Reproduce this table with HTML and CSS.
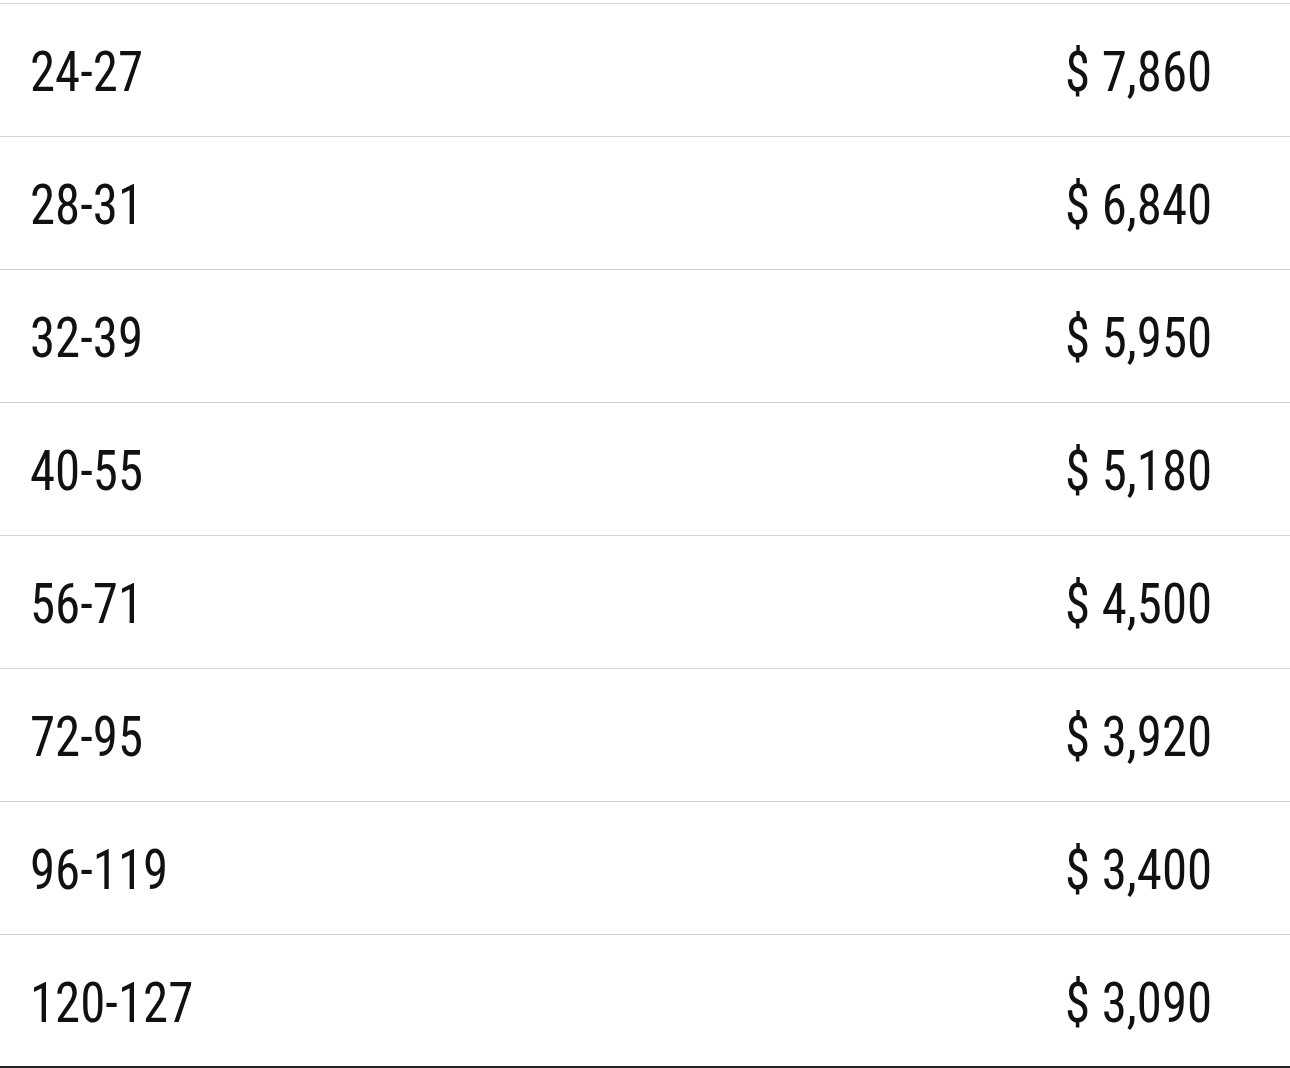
FILE: index.html
```html
<!DOCTYPE html>
<html>
<head>
<meta charset="utf-8">
<link rel="stylesheet" href="styles.css">
</head>
<body>
<div class="table">
  <div class="row"><span class="range">24-27</span><span class="price">$ 7,860</span></div>
  <div class="row"><span class="range">28-31</span><span class="price">$ 6,840</span></div>
  <div class="row"><span class="range">32-39</span><span class="price">$ 5,950</span></div>
  <div class="row"><span class="range">40-55</span><span class="price">$ 5,180</span></div>
  <div class="row"><span class="range">56-71</span><span class="price">$ 4,500</span></div>
  <div class="row"><span class="range">72-95</span><span class="price">$ 3,920</span></div>
  <div class="row"><span class="range">96-119</span><span class="price">$ 3,400</span></div>
  <div class="row"><span class="range">120-127</span><span class="price">$ 3,090</span></div>
</div>
</body>
</html>
```
FILE: styles.css
```css
html, body {
  margin: 0;
  padding: 0;
  background: #fff;
}
.table {
  padding-top: 3px;
  border-bottom: 2px solid #222;
  height: 1063px;
}
.row {
  box-sizing: border-box;
  display: flex;
  justify-content: space-between;
  align-items: center;
  height: 133px;
  border-top: 1px solid #d2d2d2;
  padding: 4px 78px 0 30px;
  font-family: Roboto, "Liberation Sans", sans-serif;
  font-stretch: 75%;
  font-size: 55px;
  color: #111;
}
.range,
.price {
  display: inline-block;
  transform: scaleX(0.925);
}
.range {
  transform-origin: left center;
}
.price {
  transform-origin: right center;
}
```
